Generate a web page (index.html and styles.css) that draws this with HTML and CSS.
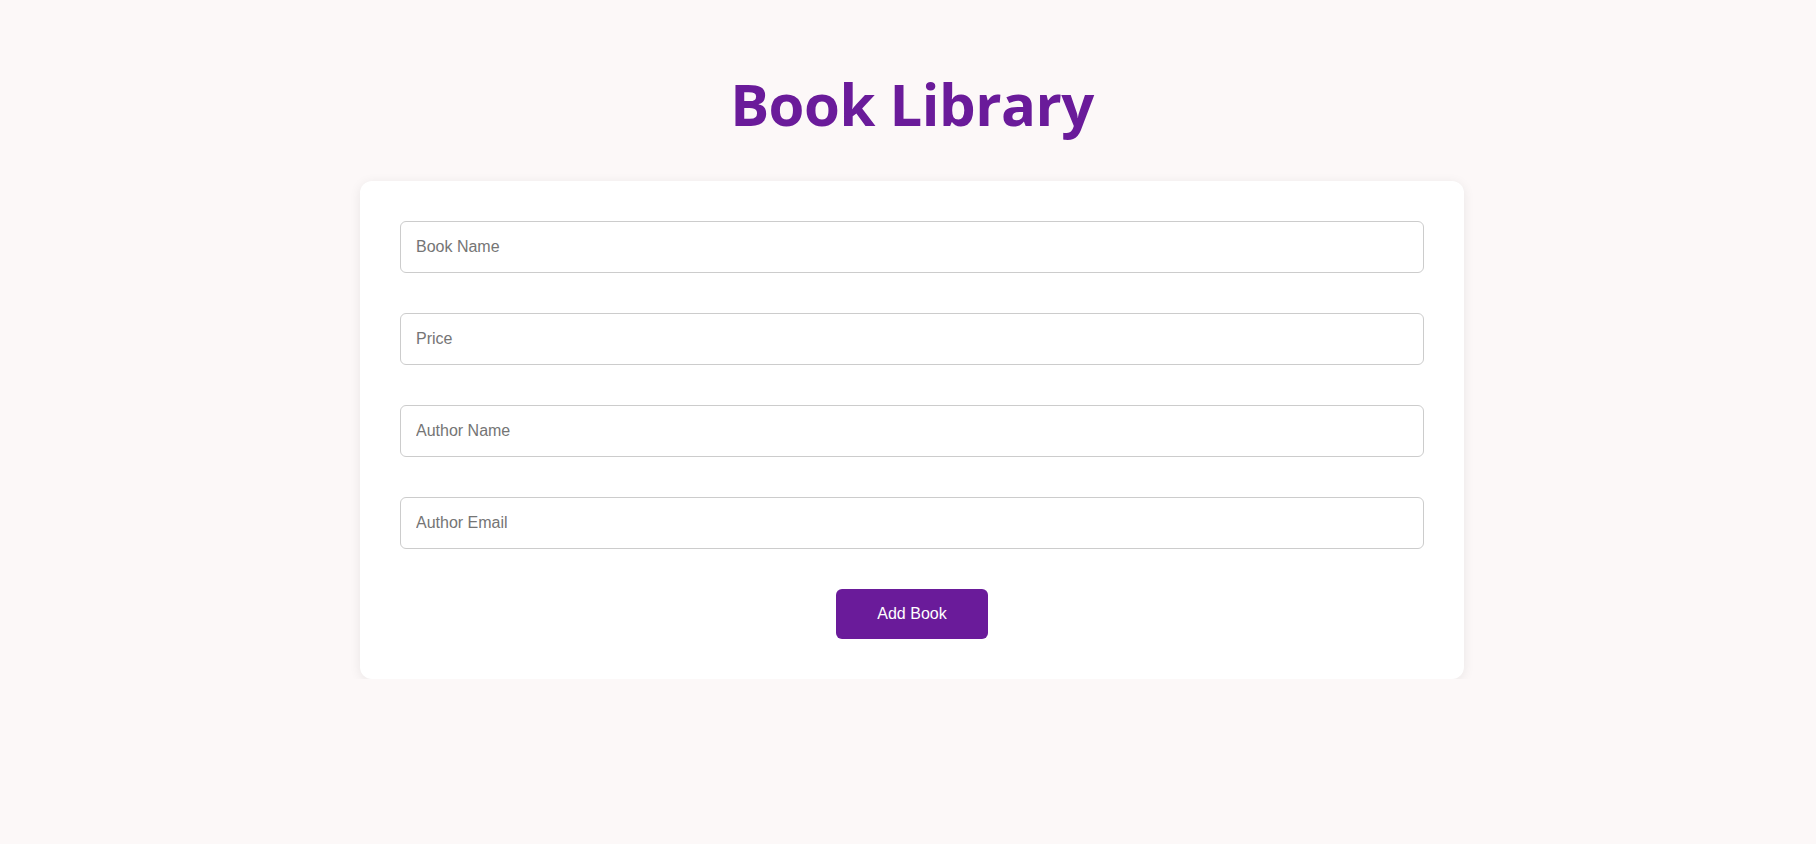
FILE: index.html
```html
<!DOCTYPE html>
<html lang="en">
<head>
<meta charset="utf-8">
<title>Book Library</title>
<link rel="stylesheet" href="styles.css">
</head>
<body>
<div class="page">
  <h1 class="title">Book Library</h1>
  <form class="card">
    <input class="field" type="text" placeholder="Book Name">
    <input class="field" type="text" placeholder="Price">
    <input class="field" type="text" placeholder="Author Name">
    <input class="field" type="email" placeholder="Author Email">
    <div class="actions">
      <button class="btn" type="button">Add Book</button>
    </div>
  </form>
</div>
</body>
</html>
```

FILE: styles.css
```css
html, body {
  margin: 0;
  padding: 0;
  background: #fcf8f8;
}

body {
  font-family: "Liberation Sans", Arial, sans-serif;
}

.page {
  padding: 64px 0 0 8px;
  display: flex;
  flex-direction: column;
  align-items: center;
}

.title {
  margin: 0 0 38px;
  font-family: "Open Sans", "Noto Sans", sans-serif;
  font-weight: 700;
  font-size: 58px;
  line-height: 79px;
  color: #6a1b9a;
  letter-spacing: -0.5px;
}

.card {
  box-sizing: border-box;
  width: 1104px;
  padding: 40px;
  background: #ffffff;
  border-radius: 12px;
  box-shadow: 0 2px 12px rgba(0, 0, 0, 0.08);
  display: flex;
  flex-direction: column;
  gap: 40px;
}

.field {
  box-sizing: border-box;
  height: 52px;
  width: 100%;
  padding: 0 15px;
  border: 1px solid #cccccc;
  border-radius: 6px;
  font-family: "Liberation Sans", Arial, sans-serif;
  font-size: 16px;
  color: #333;
  background: #fff;
  outline: none;
}

.field::placeholder {
  color: #757575;
}

.actions {
  display: flex;
  justify-content: center;
}

.btn {
  box-sizing: border-box;
  width: 152px;
  height: 50px;
  border: none;
  border-radius: 6px;
  background: #6a1b9a;
  color: #ffffff;
  font-family: "Liberation Sans", Arial, sans-serif;
  font-size: 16px;
  cursor: pointer;
}
```
